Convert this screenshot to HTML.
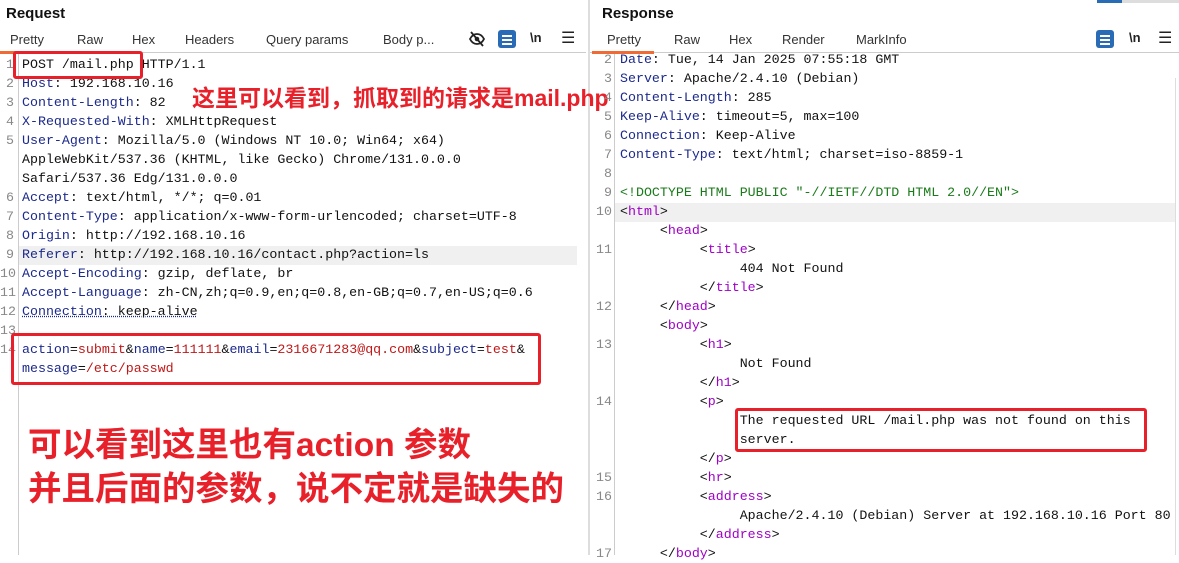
<!DOCTYPE html>
<html><head><meta charset="utf-8"><style>
*{margin:0;padding:0;box-sizing:border-box}
body{width:1179px;height:555px;background:#fff;position:relative;overflow:hidden;font-family:"Liberation Sans",sans-serif}
.abs{position:absolute}
.title{font-weight:bold;font-size:15px;color:#111;top:5px}
.tab{font-size:13px;color:#333;top:32px;position:absolute}
.code{font-family:"Liberation Mono",monospace;font-size:13.3px;color:#111;position:absolute;white-space:pre;line-height:19px}
.ln{font-family:"Liberation Mono",monospace;font-size:13.3px;color:#888;position:absolute;line-height:19px;white-space:pre;text-align:right}
.k{color:#1c2a8c}.r{color:#c01818}.t{color:#a000c8}.g{color:#1a7a1a}
.box{position:absolute;border:3px solid #e8202a;border-radius:3px}
.cn{font-family:"Liberation Sans","Noto Sans CJK SC",sans-serif;font-weight:bold;color:#e8202a;position:absolute;white-space:nowrap}
.icon{position:absolute;top:30px;font-size:13px;color:#222}
.wrap{position:absolute;top:30px;width:18px;height:18px;background:#2a6bb5;border-radius:3px}
.wrap:before{content:"";position:absolute;left:4px;top:5px;width:10px;height:2px;background:#fff;box-shadow:0 4px 0 #fff,0 8px 0 #fff}
</style></head><body>
<div class="abs title" style="left:6px">Request</div>
<div class="tab" style="left:10px">Pretty</div>
<div class="tab" style="left:77px">Raw</div>
<div class="tab" style="left:132px">Hex</div>
<div class="tab" style="left:185px">Headers</div>
<div class="tab" style="left:266px">Query params</div>
<div class="tab" style="left:383px">Body p...</div>
<svg class="abs" style="left:468px;top:30px" width="18" height="18" viewBox="0 0 18 18"><path d="M2 9c2-4 5-5 7-5s5 1 7 5c-2 4-5 5-7 5s-5-1-7-5z" fill="none" stroke="#222" stroke-width="1.8"/><circle cx="9" cy="9" r="2.3" fill="#222"/><path d="M3 2l12 14" stroke="#222" stroke-width="1.8"/></svg>
<div class="wrap" style="left:498px"></div>
<div class="icon" style="left:530px;font-weight:bold">\n</div>
<div class="icon" style="left:561px;font-size:16px;top:28px">&#9776;</div>
<div class="abs" style="left:0;top:52px;width:586px;height:1px;background:#ccc"></div>
<div class="abs" style="left:0;top:51px;width:62px;height:3px;background:#f06a35"></div>
<div class="abs" style="left:588px;top:0;width:2px;height:555px;background:#ddd"></div>
<div class="abs" style="left:18px;top:54px;width:1px;height:501px;background:#ccc"></div>
<div class="abs" style="left:19px;top:246px;width:558px;height:19px;background:#f0f0f0"></div>
<div class="ln" style="left:0;top:55px;width:14px">1
2
3
4
5


6
7
8
9
10
11
12
13
14</div>
<div class="code" style="left:22px;top:55px">POST /mail.php HTTP/1.1
<span class="k">Host</span>: 192.168.10.16
<span class="k">Content-Length</span>: 82
<span class="k">X-Requested-With</span>: XMLHttpRequest
<span class="k">User-Agent</span>: Mozilla/5.0 (Windows NT 10.0; Win64; x64)
AppleWebKit/537.36 (KHTML, like Gecko) Chrome/131.0.0.0
Safari/537.36 Edg/131.0.0.0
<span class="k">Accept</span>: text/html, */*; q=0.01
<span class="k">Content-Type</span>: application/x-www-form-urlencoded; charset=UTF-8
<span class="k">Origin</span>: http://192.168.10.16
<span class="k">Referer</span>: http://192.168.10.16/contact.php?action=ls
<span class="k">Accept-Encoding</span>: gzip, deflate, br
<span class="k">Accept-Language</span>: zh-CN,zh;q=0.9,en;q=0.8,en-GB;q=0.7,en-US;q=0.6
<span class="k" style="text-decoration:underline dotted">Connection</span><span style="text-decoration:underline dotted #1c2a8c">: keep-alive</span>

<span class="k">action</span>=<span class="r">submit</span>&amp;<span class="k">name</span>=<span class="r">111111</span>&amp;<span class="k">email</span>=<span class="r">2316671283@qq.com</span>&amp;<span class="k">subject</span>=<span class="r">test</span>&amp;
<span class="k">message</span>=<span class="r">/etc/passwd</span></div>
<div class="box" style="left:13px;top:51px;width:130px;height:28px"></div>
<div class="box" style="left:11px;top:333px;width:530px;height:52px"></div>
<div class="cn" style="left:192px;top:79px;font-size:23px">这里可以看到，抓取到的请求是mail.php</div>
<div class="cn" style="left:28px;top:417px;font-size:33.5px">可以看到这里也有action 参数</div>
<div class="cn" style="left:28px;top:461px;font-size:33.5px">并且后面的参数，说不定就是缺失的</div>

<div class="abs title" style="left:602px">Response</div>
<div class="tab" style="left:607px">Pretty</div>
<div class="tab" style="left:674px">Raw</div>
<div class="tab" style="left:729px">Hex</div>
<div class="tab" style="left:782px">Render</div>
<div class="tab" style="left:856px">MarkInfo</div>
<div class="wrap" style="left:1096px"></div>
<div class="icon" style="left:1129px;font-weight:bold">\n</div>
<div class="icon" style="left:1158px;font-size:16px;top:28px">&#9776;</div>
<div class="abs" style="left:1097px;top:0;width:82px;height:3px;background:#ddd"></div>
<div class="abs" style="left:1097px;top:0;width:25px;height:3px;background:#2a6bb5"></div>
<div class="abs" style="left:590px;top:52px;width:589px;height:1px;background:#ccc"></div>
<div class="abs" style="left:592px;top:51px;width:62px;height:3px;background:#f06a35"></div>
<div class="abs" style="left:614px;top:54px;width:1px;height:501px;background:#ccc"></div>
<div class="abs" style="left:615px;top:203px;width:560px;height:19px;background:#f0f0f0"></div>
<div class="abs" style="left:1175px;top:78px;width:1px;height:477px;background:#ddd"></div>
<div class="ln" style="left:594px;top:50px;width:18px">2
3
4
5
6
7
8
9
10

11


12

13


14



15
16


17</div>
<div class="code" style="left:620px;top:50px"><span class="k">Date</span>: Tue, 14 Jan 2025 07:55:18 GMT
<span class="k">Server</span>: Apache/2.4.10 (Debian)
<span class="k">Content-Length</span>: 285
<span class="k">Keep-Alive</span>: timeout=5, max=100
<span class="k">Connection</span>: Keep-Alive
<span class="k">Content-Type</span>: text/html; charset=iso-8859-1

<span class="g">&lt;!DOCTYPE HTML PUBLIC "-//IETF//DTD HTML 2.0//EN"&gt;</span>
&lt;<span class="t">html</span>&gt;
     &lt;<span class="t">head</span>&gt;
          &lt;<span class="t">title</span>&gt;
               404 Not Found
          &lt;/<span class="t">title</span>&gt;
     &lt;/<span class="t">head</span>&gt;
     &lt;<span class="t">body</span>&gt;
          &lt;<span class="t">h1</span>&gt;
               Not Found
          &lt;/<span class="t">h1</span>&gt;
          &lt;<span class="t">p</span>&gt;
               The requested URL /mail.php was not found on this
               server.
          &lt;/<span class="t">p</span>&gt;
          &lt;<span class="t">hr</span>&gt;
          &lt;<span class="t">address</span>&gt;
               Apache/2.4.10 (Debian) Server at 192.168.10.16 Port 80
          &lt;/<span class="t">address</span>&gt;
     &lt;/<span class="t">body</span>&gt;</div>
<div class="box" style="left:735px;top:408px;width:412px;height:44px"></div>
</body></html>
